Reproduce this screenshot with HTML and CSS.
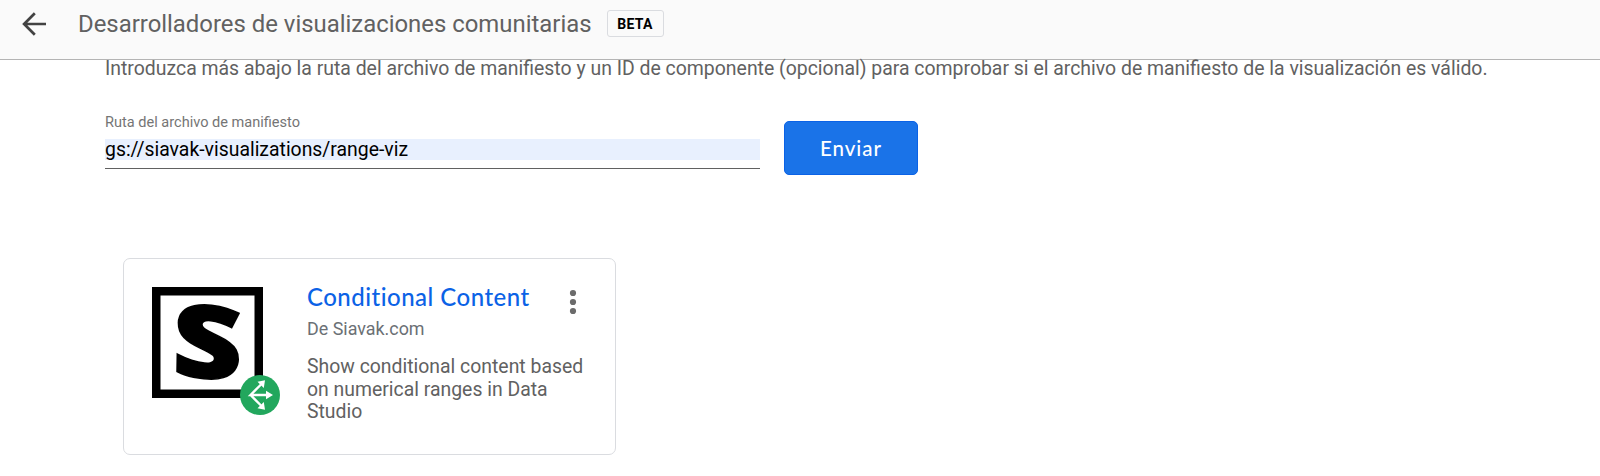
FILE: index.html
```html
<!DOCTYPE html>
<html lang="es">
<head>
<meta charset="utf-8">
<title>Desarrolladores de visualizaciones comunitarias</title>
<link rel="stylesheet" href="styles.css">
</head>
<body>
<header class="topbar">
  <svg class="back" viewBox="0 0 24 24" width="24" height="24"><path d="M24 12H2.500M12.800 1.300L2.100 12l10.700 10.700" fill="none" stroke="#424242" stroke-width="2.700"/></svg>
  <h1 class="title">Desarrolladores de visualizaciones comunitarias</h1>
  <span class="beta">BETA</span>
</header>
<main class="content">
  <p class="intro">Introduzca más abajo la ruta del archivo de manifiesto y un ID de componente (opcional) para comprobar si el archivo de manifiesto de la visualización es válido.</p>
  <form class="form">
    <div class="field">
      <label class="label">Ruta del archivo de manifiesto</label>
      <div class="value">gs://siavak-visualizations/range-viz</div>
    </div>
    <button class="send" type="button">Enviar</button>
  </form>
  <article class="card">
    <div class="logo">
      <svg class="mark" viewBox="0 0 111 111" width="111" height="111"><rect x="4.250" y="4.250" width="102.500" height="102.500" fill="#fff" stroke="#000" stroke-width="8.500"/><text class="letter" transform="translate(54.800 91.300) rotate(6) skewX(5) scale(1.220 1.010)" text-anchor="middle">S</text></svg>
      <svg class="badge" viewBox="0 0 40 40" width="40" height="40"><circle cx="20" cy="20" r="20" fill="#22a75d"/><path d="M28 20H10.500L21 9.500M10.500 20L21 30.500" fill="none" stroke="#fff" stroke-width="2.300"/><path d="M26 15.800L33 20l-7 4.200zM25 5.300l-1.200 7.800-6.300-6.300zM25 34.700l-1.200-7.800-6.300 6.300z" fill="#fff"/></svg>
    </div>
    <div class="info">
      <h2 class="name">Conditional Content</h2>
      <p class="author">De Siavak.com</p>
      <p class="desc">Show conditional content based<br>on numerical ranges in Data<br>Studio</p>
    </div>
    <svg class="menu" viewBox="0 0 8 26" width="8" height="26"><g fill="#6b6b6b"><circle cx="4" cy="4" r="3.100"/><circle cx="4" cy="13" r="3.100"/><circle cx="4" cy="22" r="3.100"/></g></svg>
  </article>
</main>
</body>
</html>
```
FILE: styles.css
```css
* { box-sizing: border-box; }
body { margin: 0; height: 476px; overflow: hidden; background: #fff; font-family: Roboto, sans-serif; color: #616161; }
h1, h2, p { margin: 0; font-weight: 400; }
.topbar { display: flex; align-items: center; height: 60px; padding: 0 0 12px 22px; background: #fafafa; border-bottom: 1px solid #b4b4b4; }
.back { margin-right: 32px; }
.title { font-size: 23.9px; line-height: 28px; white-space: nowrap; }
.beta { display: flex; align-items: center; justify-content: center; width: 57px; height: 27px; margin-left: 15px; border: 1px solid #dadce0; border-radius: 3px; color: #000; font: 700 14px Roboto, sans-serif; letter-spacing: 0.3px; }
.content { padding-left: 105px; }
.intro { height: 28px; font-size: 19.43px; line-height: 18px; white-space: nowrap; }
.form { display: flex; gap: 24px; padding-top: 25px; }
.field { width: 655px; height: 56px; border-bottom: 1px solid #616161; }
.label { display: block; height: 26px; font-size: 14.55px; line-height: 19px; color: #757575; }
.value { height: 21px; background: #e8f0fe; color: #000; font-size: 19.4px; line-height: 21px; }
.send { width: 134px; height: 54px; margin-top: 8px; padding: 0; border: 1px solid #0b62e6; border-radius: 5px; background: #1a73e8; color: #fff; font: 500 20.5px Lato, sans-serif; letter-spacing: 1px; }
.card { display: flex; width: 493px; height: 197px; margin: 83px 0 0 18px; padding: 28px 0 0 28px; border: 1px solid #dadce0; border-radius: 7px; }
.logo { position: relative; flex: none; width: 155px; }
.mark, .menu { display: block; overflow: visible; }
.letter { font: 800 100px "Open Sans", sans-serif; stroke: #000; stroke-width: 1.5px; }
.badge { position: absolute; left: 88px; top: 88px; }
.info { flex: none; width: 262px; }
.name { height: 28px; font: 500 24px/20px Lato, sans-serif; color: #0b62e6; font-variant-ligatures: none; letter-spacing: 0.48px; white-space: nowrap; }
.author { margin-top: 3px; font-size: 17.9px; line-height: 21px; color: #6b7075; }
.desc { margin-top: 17px; font-size: 19.4px; line-height: 22.5px; white-space: nowrap; }
.menu { margin-top: 2px; }
```
